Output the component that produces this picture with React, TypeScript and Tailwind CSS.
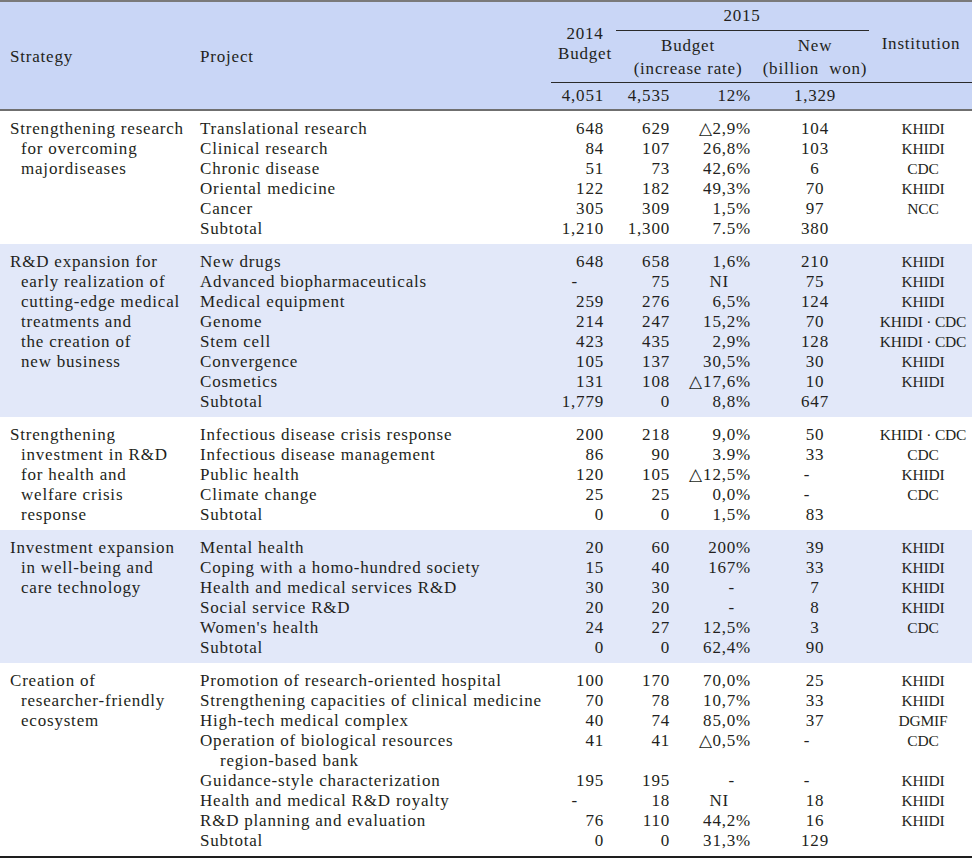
import React from "react";

type Row = {
  p: string[];
  a: string;
  b: string;
  c: string;
  n: string;
  i: string;
};

type Group = { s: string[]; rows: Row[]; shaded: boolean };

const r = (p: string | string[], a: string, b: string, c: string, n: string, i: string): Row => ({
  p: Array.isArray(p) ? p : [p],
  a,
  b,
  c,
  n,
  i,
});

const groups: Group[] = [
  {
    s: ["Strengthening research", "for overcoming", "majordiseases"],
    shaded: false,
    rows: [
      r("Translational research", "648", "629", "△2,9%", "104", "KHIDI"),
      r("Clinical research", "84", "107", "26,8%", "103", "KHIDI"),
      r("Chronic disease", "51", "73", "42,6%", "6", "CDC"),
      r("Oriental medicine", "122", "182", "49,3%", "70", "KHIDI"),
      r("Cancer", "305", "309", "1,5%", "97", "NCC"),
      r("Subtotal", "1,210", "1,300", "7.5%", "380", ""),
    ],
  },
  {
    s: [
      "R&D expansion for",
      "early realization of",
      "cutting-edge medical",
      "treatments and",
      "the creation of",
      "new business",
    ],
    shaded: true,
    rows: [
      r("New drugs", "648", "658", "1,6%", "210", "KHIDI"),
      r("Advanced biopharmaceuticals", "-", "75", "NI", "75", "KHIDI"),
      r("Medical equipment", "259", "276", "6,5%", "124", "KHIDI"),
      r("Genome", "214", "247", "15,2%", "70", "KHIDI · CDC"),
      r("Stem cell", "423", "435", "2,9%", "128", "KHIDI · CDC"),
      r("Convergence", "105", "137", "30,5%", "30", "KHIDI"),
      r("Cosmetics", "131", "108", "△17,6%", "10", "KHIDI"),
      r("Subtotal", "1,779", "0", "8,8%", "647", ""),
    ],
  },
  {
    s: ["Strengthening", "investment in R&D", "for health and", "welfare crisis", "response"],
    shaded: false,
    rows: [
      r("Infectious disease crisis response", "200", "218", "9,0%", "50", "KHIDI · CDC"),
      r("Infectious disease management", "86", "90", "3.9%", "33", "CDC"),
      r("Public health", "120", "105", "△12,5%", "-", "KHIDI"),
      r("Climate change", "25", "25", "0,0%", "-", "CDC"),
      r("Subtotal", "0", "0", "1,5%", "83", ""),
    ],
  },
  {
    s: ["Investment expansion", "in well-being and", "care technology"],
    shaded: true,
    rows: [
      r("Mental health", "20", "60", "200%", "39", "KHIDI"),
      r("Coping with a homo-hundred society", "15", "40", "167%", "33", "KHIDI"),
      r("Health and medical services R&D", "30", "30", "-", "7", "KHIDI"),
      r("Social service R&D", "20", "20", "-", "8", "KHIDI"),
      r("Women's health", "24", "27", "12,5%", "3", "CDC"),
      r("Subtotal", "0", "0", "62,4%", "90", ""),
    ],
  },
  {
    s: ["Creation of", "researcher-friendly", "ecosystem"],
    shaded: false,
    rows: [
      r("Promotion of research-oriented hospital", "100", "170", "70,0%", "25", "KHIDI"),
      r("Strengthening capacities of clinical medicine", "70", "78", "10,7%", "33", "KHIDI"),
      r("High-tech medical complex", "40", "74", "85,0%", "37", "DGMIF"),
      r(["Operation of biological resources", "region-based bank"], "41", "41", "△0,5%", "-", "CDC"),
      r("Guidance-style characterization", "195", "195", "-", "-", "KHIDI"),
      r("Health and medical R&D royalty", "-", "18", "NI", "18", "KHIDI"),
      r("R&D planning and evaluation", "76", "110", "44,2%", "16", "KHIDI"),
      r("Subtotal", "0", "0", "31,3%", "129", ""),
    ],
  },
];

function DataRow({ row }: { row: Row }) {
  const aDash = row.a === "-";
  const pctClass =
    row.c === "NI" ? "pr-[31px]" : row.c === "-" ? "pr-[25px]" : "pr-[9px]";
  return (
    <div className="grid grid-cols-[350px_54px_66px_90px_110px_1fr] items-start">
      <div className="flex flex-col whitespace-nowrap">
        {row.p.map((t, k) => (
          <div key={k} className={k > 0 ? "pl-[20px]" : ""}>
            {t}
          </div>
        ))}
      </div>
      <div className={`text-right whitespace-nowrap ${aDash ? "pr-[26px]" : ""}`}>{row.a}</div>
      <div className="text-right whitespace-nowrap">{row.b}</div>
      <div className={`text-right whitespace-nowrap ${pctClass}`}>{row.c}</div>
      <div className={`flex justify-center whitespace-nowrap ${row.n === "-" ? "pr-[16px]" : ""}`}>
        {row.n}
      </div>
      <div className="flex justify-center whitespace-nowrap text-[15.5px] tracking-[-0.2px] pl-[4px]">
        {row.i}
      </div>
    </div>
  );
}

function GroupBlock({ g }: { g: Group }) {
  return (
    <div className={`flex pt-[8px] pb-[5px] ${g.shaded ? "bg-[#e2e8f9]" : "bg-white"}`}>
      <div className="w-[200px] shrink-0 pl-[10px] flex flex-col whitespace-nowrap">
        {g.s.map((t, k) => (
          <div key={k} className={k > 0 ? "pl-[11px]" : ""}>
            {t}
          </div>
        ))}
      </div>
      <div className="flex-1 flex flex-col">
        {g.rows.map((row, k) => (
          <DataRow key={k} row={row} />
        ))}
      </div>
    </div>
  );
}

function Header() {
  return (
    <div className="border-t-2 border-b-2 border-t-[#7a7a7a] border-b-[#6f6f6f] bg-[#c9d6f6]">
      <div className="grid grid-cols-[200px_350px_54px_66px_90px_110px_1fr] grid-rows-[28px_1px_51px_1px_26px]">
        <div className="col-start-1 row-start-1 row-span-5 flex items-center pl-[10px] pt-[3px]">
          Strategy
        </div>
        <div className="col-start-2 row-start-1 row-span-5 flex items-center pt-[3px]">Project</div>
        <div className="col-start-3 row-start-1 row-span-3 flex items-center justify-center pl-[16px] whitespace-nowrap pt-[4px]">
          <div className="flex flex-col items-center">
            <span>2014</span>
            <span>Budget</span>
          </div>
        </div>
        <div className="col-start-4 col-span-3 row-start-1 flex items-center justify-center pl-[10px]">
          2015
        </div>
        <div className="col-start-4 col-span-3 row-start-2 ml-[12px] mr-[1px] bg-[#2a2a2a]" />
        <div className="col-start-4 col-span-2 row-start-3 flex items-center justify-center pl-[12px] whitespace-nowrap">
          <div className="flex flex-col items-center leading-[23px]">
            <span>Budget</span>
            <span>(increase rate)</span>
          </div>
        </div>
        <div className="col-start-6 row-start-3 flex items-center justify-center whitespace-nowrap">
          <div className="flex flex-col items-center leading-[23px]">
            <span>New</span>
            <span>(billion&nbsp; won)</span>
          </div>
        </div>
        <div className="col-start-7 row-start-1 row-span-3 flex items-center justify-center pt-[4px]">
          Institution
        </div>
        <div className="col-start-3 col-span-5 row-start-4 ml-[1px] bg-[#2a2a2a]" />
        <div className="col-start-3 row-start-5 flex items-center justify-end">4,051</div>
        <div className="col-start-4 row-start-5 flex items-center justify-end">4,535</div>
        <div className="col-start-5 row-start-5 flex items-center justify-end pr-[9px]">12%</div>
        <div className="col-start-6 row-start-5 flex items-center justify-center">1,329</div>
      </div>
    </div>
  );
}

export default function App() {
  return (
    <div className="w-[972px] bg-white text-[#231f20] font-['Liberation_Serif',serif] text-[17px] leading-[20px] tracking-[0.8px]">
      <Header />
      {groups.map((g, k) => (
        <GroupBlock key={k} g={g} />
      ))}
      <div className="h-[2px] bg-[#1e1e1e]" />
    </div>
  );
}
